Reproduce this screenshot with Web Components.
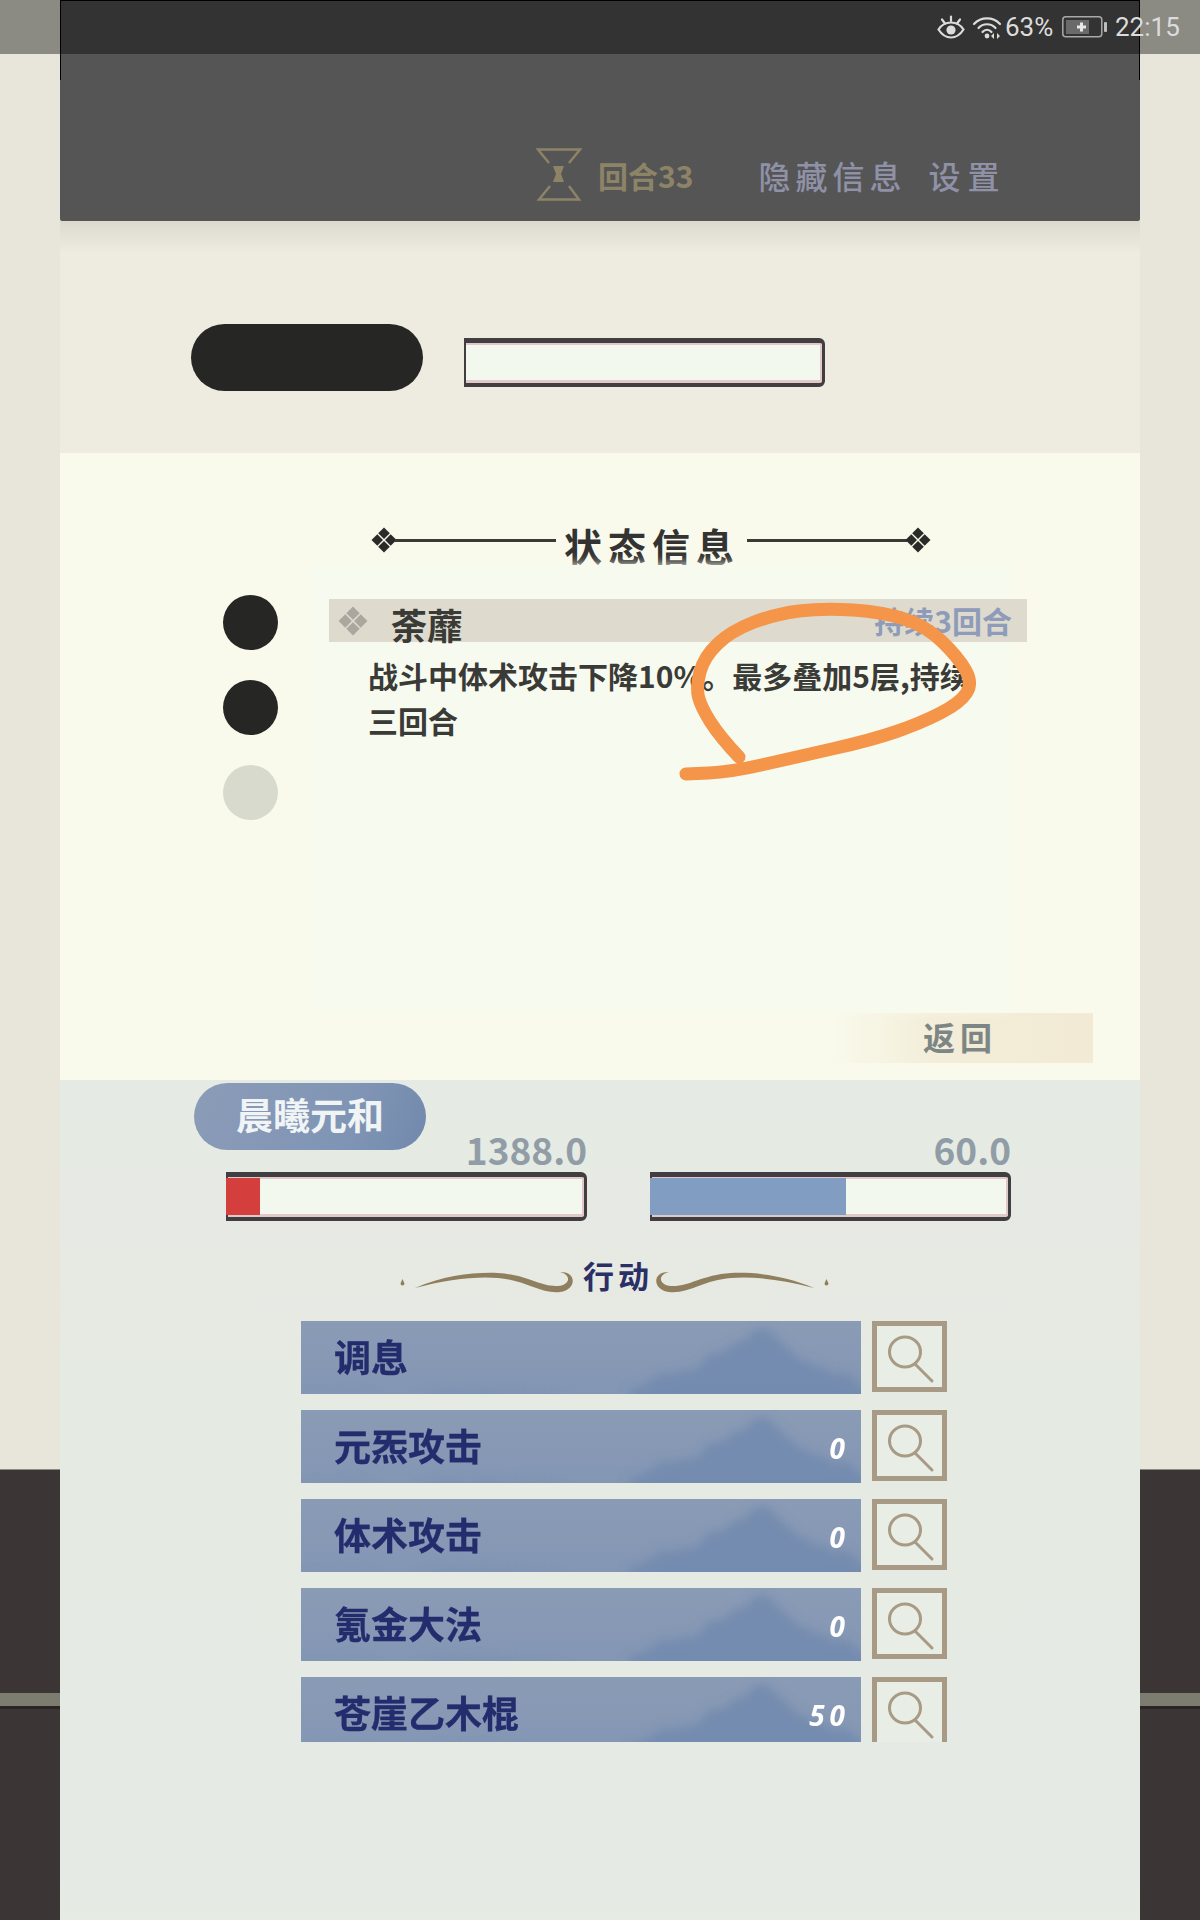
<!DOCTYPE html>
<html lang="zh">
<head>
<meta charset="utf-8">
<title>状态信息</title>
<style>
    html, body { margin: 0; padding: 0; }
    body {
        width: 1200px;
        height: 1920px;
        overflow: hidden;
        position: relative;
        font-family: "Noto Sans CJK SC", "Noto Sans", sans-serif;
        background: linear-gradient(#e8e6da 0 1469px, #8e8c82 1469px 1470px, #3b3535 1470px 1693px, #7c7c70 1693px 1706px, #282523 1706px 1709px, #3b3535 1709px);
    }
    game-panel { margin: 0 60px; }
</style>
</head>
<body>
<status-bar></status-bar>
<game-panel>
    <game-header></game-header>
    <enemy-section></enemy-section>
    <status-panel></status-panel>
    <player-section>
        <action-row label="调息"></action-row>
        <action-row label="元炁攻击" cost="0"></action-row>
        <action-row label="体术攻击" cost="0"></action-row>
        <action-row label="氪金大法" cost="0"></action-row>
        <action-row label="苍崖乙木棍" cost="50"></action-row>
    </player-section>
</game-panel>

<script>
// Four small diamonds, used by the title line and the status bar
const diamonds = (size, color) => `
    <svg width="${size}" height="${size}" viewBox="0 0 26 26" fill="${color}" style="flex:none;display:block">
        <path d="M13 .5l5.8 5.8L13 12 7.2 6.3z"/>
        <path d="M6.3 7.2L12 13l-5.7 5.8L.5 13z"/>
        <path d="M19.7 7.2L25.5 13l-5.8 5.8L14 13z"/>
        <path d="M13 14l5.8 5.7L13 25.5l-5.8-5.8z"/>
    </svg>`;

// Tapered swoosh on each side of the action heading
const swoosh = (flip) => `
    <svg width="178" height="30" viewBox="0 0 178 30" fill="#8f7f5e" style="${flip ? 'transform:scaleX(-1)' : ''}">
        <path d="M15 23C45 10 75 7 98 8c30 2 42 14 60 13 12-1 14-11 2-14 16-1 18 17 0 20-20 2-35-12-62-14-23-2-53 2-83 10z"/>
        <path d="M2.500 14l1.800 4a1.900 1.900 0 1 1-3.600 0z"/>
    </svg>`;

class StatusBar extends HTMLElement {
    constructor() {
        super();
        this.attachShadow({ mode: 'open' }).innerHTML = `
            <style>
                :host {
                    position: absolute; left: 0; top: 0; width: 1200px; height: 54px; z-index: 5;
                    display: flex; align-items: center; box-sizing: border-box; padding: 0 0 0 937px;
                    background: rgba(0, 0, 0, .4);
                    color: #dcdcdc; font: 400 26px/1 Roboto, sans-serif;
                }
                svg { display: block; flex: none; }
                .pct { margin-left: 3px; width: 57px; }
                .time { margin-left: 8px; }
            </style>
            <svg width="28" height="24" viewBox="0 0 28 24" fill="none" stroke="#dcdcdc" stroke-width="2.2" stroke-linecap="round">
                <path d="M1.5 14.5C5 9 9 7.5 14 7.5s9 1.500 12.500 7C23 20 19 22.500 14 22.500S5 20 1.500 14.500z"/>
                <circle cx="14" cy="15" r="4.600" fill="#dcdcdc" stroke="none"/>
                <path d="M5 4.500l3 4M14 1.500v4.500M23 4.500l-3 4"/>
            </svg>
            <svg width="30" height="24" viewBox="0 0 30 24" fill="none" stroke="#dcdcdc" stroke-width="2.2" stroke-linecap="round" style="margin-left:7px">
                <path d="M2 9C9 1.500 21 1.500 28 9"/>
                <path d="M6.500 13C11 8 19 8 23.500 13"/>
                <path d="M10.500 17C13 14 17 14 19.500 17"/>
                <circle cx="15" cy="21" r="2.400" fill="#dcdcdc" stroke="none"/>
                <path d="M22 18l-3 3 3 3zM25 18l3 3-3 3z" fill="#dcdcdc" stroke="none"/>
            </svg>
            <span class="pct">63%</span>
            <svg width="45" height="22" viewBox="0 0 45 22">
                <rect x=".8" y=".8" width="39" height="20" rx="3" fill="none" stroke="#a9a9a9" stroke-width="1.500"/>
                <rect x="4" y="4" width="23" height="14" fill="#6a6a6a"/>
                <path d="M18 6.500h3v3h3v3h-3v3h-3v-3h-3v-3h3z" fill="#e8e8e8"/>
                <rect x="42" y="6" width="3" height="10" rx="1" fill="#bdbdbd"/>
            </svg>
            <span class="time">22:15</span>`;
    }
}

class GamePanel extends HTMLElement {
    constructor() {
        super();
        this.attachShadow({ mode: 'open' }).innerHTML = `
            <style>:host { display: flex; flex-direction: column; height: 1920px; }</style>
            <slot></slot>`;
    }
}

class GameHeader extends HTMLElement {
    constructor() {
        super();
        this.attachShadow({ mode: 'open' }).innerHTML = `
            <style>
                :host {
                    display: flex; align-items: center; flex: none; position: relative; z-index: 1;
                    height: 221px; box-sizing: border-box; padding: 148px 0 20px 476px;
                    background: #555; border-radius: 0 0 2px 2px;
                }
                :host::before {
                    content: ""; position: absolute; left: 0; right: 0; top: 0; height: 80px;
                    border: 1px solid #000; border-bottom: 0; box-sizing: border-box;
                }
                svg { display: block; flex: none; }
                .round { margin-left: 16px; color: #8d8468; font: 700 30px/1 "Noto Sans CJK SC", sans-serif; }
                .link { color: #8f91a6; font: 500 32px/1 "Noto Sans CJK SC", sans-serif; letter-spacing: 5px; }
                .hide { margin-left: 65px; }
                .set { margin-left: 22px; letter-spacing: 7px; }
            </style>
            <svg width="46" height="53" viewBox="0 0 46 53" fill="none" stroke="#8d8468" stroke-width="2.400">
                <path d="M13 15L2 1.500h42L33 15"/>
                <path d="M14 38L3 51.500h40L33 38"/>
                <path d="M17 18h11l-3 8 3 8H17l3-8z" fill="#8d8468" stroke="none"/>
            </svg>
            <span class="round">回合33</span>
            <span class="link hide">隐藏信息</span>
            <span class="link set">设置</span>`;
    }
}

class FrameBar extends HTMLElement {
    constructor() {
        super();
        const fill = this.getAttribute('fill') || 'transparent';
        const width = this.getAttribute('fill-width') || '0';
        this.attachShadow({ mode: 'open' }).innerHTML = `
            <style>
                :host {
                    display: flex; flex: none; box-sizing: border-box; width: 361px; height: 49px;
                    border: solid #403e40; border-width: 5px 3px 4px 2px; border-radius: 0 6px 6px 0;
                    background: #f3f8ee;
                    box-shadow: inset 0 2px 0 #e2c8c8, inset 0 -3px 0 #e2c8c8, inset -2px 0 0 #e2c8c8;
                }
                .fill { width: ${width}px; margin: 1px 0 2px -2px; background: ${fill}; }
            </style>
            <div class="fill"></div>`;
    }
}

class EnemySection extends HTMLElement {
    constructor() {
        super();
        this.attachShadow({ mode: 'open' }).innerHTML = `
            <style>
                :host {
                    display: flex; align-items: flex-start; gap: 41px; flex: none;
                    height: 232px; box-sizing: border-box; padding: 103px 0 0 131px;
                    background: linear-gradient(#dcdace 0, #eeece0 32px);
                }
                .pill { width: 232px; height: 67px; border-radius: 34px; background: #262624; }
                frame-bar { margin-top: 14px; }
            </style>
            <div class="pill"></div>
            <frame-bar></frame-bar>`;
    }
}

class StatusPanel extends HTMLElement {
    constructor() {
        super();
        // Hand-drawn orange mark, page coordinates
        const pts = [[739,757],[720,737],[701,707],[696,687],[704,657],[731,631],[775,614],[823,608],[883,612],[926,626],[958,657],[973,683],[960,703],[921,723],[872,740],[796,757],[731,772],[686,774]];
        let d = `M${pts[0][0]} ${pts[0][1]}`;
        for (let i = 1; i < pts.length - 1; i++) {
            const mx = (pts[i][0] + pts[i + 1][0]) / 2;
            const my = (pts[i][1] + pts[i + 1][1]) / 2;
            d += ` Q${pts[i][0]} ${pts[i][1]} ${mx} ${my}`;
        }
        d += ` L${pts[pts.length - 1][0]} ${pts[pts.length - 1][1]}`;

        this.attachShadow({ mode: 'open' }).innerHTML = `
            <style>
                :host {
                    display: block; position: relative; flex: none; height: 627px; box-sizing: border-box;
                    padding-top: 74px; background: #f9faeb; color: #3a3a37;
                }
                .title { display: flex; align-items: flex-start; margin-left: 311px; height: 36px; }
                .title .line { flex: none; height: 3px; margin-top: 12px; background: #3a3a37; }
                .title b { flex: none; width: 176px; margin: 0 7px 0 8px; font: 700 38px/36px "Noto Sans CJK SC", sans-serif; letter-spacing: 6px; color: #333; white-space: nowrap; }
                .body { display: flex; gap: 34px; margin: 2px 0 0 163px; }
                .dots { display: flex; flex-direction: column; gap: 30px; padding-top: 30px; }
                .dots i { display: block; width: 55px; height: 55px; border-radius: 50%; background: #262624; }
                .dots i.off { background: #d9dace; }
                .sheet { width: 698px; height: 445px; box-sizing: border-box; padding: 34px 0 0 17px; background: #f7faee; box-shadow: 0 0 10px #f7faee; }
                .bar { display: flex; align-items: center; width: 698px; height: 43px; box-sizing: border-box; padding: 0 15px 0 9px; background: #dedace; }
                .name { margin-left: 23px; font: 700 36px/43px "Noto Sans CJK SC", sans-serif; padding-top: 4px; height: 39px; }
                .turns { margin-left: auto; color: #8e9cb9; font: 700 30px/43px "Noto Sans CJK SC", sans-serif; }
                .desc { width: 610px; margin: 11px 0 0 39px; font: 700 30px/45px "Noto Sans CJK SC", sans-serif; }
                .back {
                    display: flex; align-items: center; box-sizing: border-box; width: 260px; height: 50px; margin: 3px 0 0 773px;
                    padding: 0 0 4px 90px; background: linear-gradient(90deg, #f9faeb 0, #f3edd9 40%, #f2ead4 100%);
                    color: #7c8785; font: 700 32px/46px "Noto Sans CJK SC", sans-serif; letter-spacing: 5px;
                }
                .mark { position: absolute; left: 0; top: 0; pointer-events: none; }
            </style>
            <div class="title">
                ${diamonds(26, '#2a2a28')}
                <span class="line" style="width:161px;margin-left:-2px"></span>
                <b>状态信息</b>
                <span class="line" style="width:160px;margin-right:-2px"></span>
                ${diamonds(26, '#2a2a28')}
            </div>
            <div class="body">
                <div class="dots"><i></i><i></i><i class="off"></i></div>
                <div class="sheet">
                    <div class="bar">
                        ${diamonds(30, '#aba79f')}
                        <span class="name">荼蘼</span>
                        <span class="turns">持续3回合</span>
                    </div>
                    <div class="desc">战斗中体术攻击下降10%。最多叠加5层,持续三回合</div>
                </div>
            </div>
            <div class="back">返回</div>
            <svg class="mark" width="1080" height="627" viewBox="60 453 1080 627" fill="none">
                <path d="${d}" stroke="#f49549" stroke-width="13" stroke-linecap="round" stroke-linejoin="round"/>
            </svg>`;
    }
}

class ActionRow extends HTMLElement {
    constructor() {
        super();
        const label = this.getAttribute('label');
        const cost = this.getAttribute('cost') || '';
        this.attachShadow({ mode: 'open' }).innerHTML = `
            <style>
                :host { display: flex; gap: 11px; flex: none; height: 73px; }
                .main {
                    position: relative; overflow: hidden; display: flex; align-items: center; justify-content: space-between;
                    width: 560px; box-sizing: border-box; padding: 0 16px 2px 33px;
                    background: linear-gradient(#8a9bb5, #8396b4);
                }
                .wash { position: absolute; inset: 0; }
                .label { position: relative; color: #232c6c; font: 700 37px/1 "Noto Sans CJK SC", sans-serif; -webkit-text-stroke: .3px #232c6c; }
                .cost { position: relative; top: 2px; color: #fff; font: italic 700 28px/1 "Noto Sans", sans-serif; letter-spacing: 5px; margin-right: -5px; }
                .find { flex: none; box-sizing: border-box; width: 75px; height: 71px; border: 5px solid #a89a84; background: #e8ede6; }
                .find svg { display: block; }
            </style>
            <div class="main">
                <svg class="wash" width="560" height="73" viewBox="0 0 560 73">
                    <defs>
                        <filter id="soft" x="-20%" y="-50%" width="140%" height="200%">
                            <feTurbulence type="fractalNoise" baseFrequency=".04" numOctaves="3" seed="7"/>
                            <feDisplacementMap in="SourceGraphic" scale="22"/>
                            <feGaussianBlur stdDeviation="5"/>
                        </filter>
                    </defs>
                    <g filter="url(#soft)">
                        <path d="M300 90L380 48 430 30 466 8 505 45 545 52 590 90z" fill="#7289ae" opacity=".85"/>
                        <path d="M100 90L140 66 180 70 260 76 300 90z" fill="#7a90b2" opacity=".7"/>
                        <path d="M0 84L50 68 90 90z" fill="#8095b5" opacity=".7"/>
                    </g>
                </svg>
                <span class="label">${label}</span>
                <span class="cost">${cost}</span>
            </div>
            <div class="find">
                <svg width="65" height="61" viewBox="0 0 65 61" fill="none" stroke="#a89a84" stroke-width="3" stroke-linecap="round">
                    <ellipse cx="28" cy="26" rx="15.500" ry="15"/>
                    <path d="M38 38l17 17"/>
                </svg>
            </div>`;
    }
}

class PlayerSection extends HTMLElement {
    constructor() {
        super();
        this.attachShadow({ mode: 'open' }).innerHTML = `
            <style>
                :host {
                    display: block; flex: 1; box-sizing: border-box; padding-top: 3px;
                    background: linear-gradient(#e5ebe4 0, #e7e9e3 190px, #e5ebe3 320px, #e5ebe4 800px, #e6ece4 100%);
                }
                .who {
                    display: flex; align-items: center; justify-content: center; width: 232px; height: 67px; margin: 0 0 -20px 134px;
                    box-sizing: border-box; padding-bottom: 4px;
                    border-radius: 34px; background: linear-gradient(110deg, #8b9cb8, #7f94b4 70%, #7189ad);
                    color: #f0f4f5; font: 700 37px/1 "Noto Sans CJK SC", sans-serif;
                }
                .meters { display: flex; gap: 63px; margin-left: 166px; }
                .meter { display: flex; flex-direction: column; width: 361px; }
                .value { height: 42px; text-align: right; color: #919da6; font: 700 37px/38px "Noto Sans CJK SC", sans-serif; }
                .heading { display: flex; align-items: flex-start; height: 30px; margin: 44px 0 26px 340px; }
                .heading b { margin: 0 -2px 0 5px; color: #2a2f66; font: 700 31px/20px "Noto Sans CJK SC", sans-serif; letter-spacing: 4px; white-space: nowrap; }
                .heading svg { display: block; flex: none; }
                .list { display: flex; flex-direction: column; gap: 16px; height: 421px; overflow: hidden; margin-left: 241px; }
            </style>
            <div class="who">晨曦元和</div>
            <div class="meters">
                <div class="meter">
                    <div class="value">1388.0</div>
                    <frame-bar fill="#d43f3d" fill-width="34"></frame-bar>
                </div>
                <div class="meter">
                    <div class="value">60.0</div>
                    <frame-bar fill="#819dc1" fill-width="196"></frame-bar>
                </div>
            </div>
            <div class="heading">
                ${swoosh(false)}
                <b>行动</b>
                ${swoosh(true)}
            </div>
            <div class="list"><slot></slot></div>`;
    }
}

customElements.define('status-bar', StatusBar);
customElements.define('game-panel', GamePanel);
customElements.define('game-header', GameHeader);
customElements.define('frame-bar', FrameBar);
customElements.define('enemy-section', EnemySection);
customElements.define('status-panel', StatusPanel);
customElements.define('action-row', ActionRow);
customElements.define('player-section', PlayerSection);
</script>
</body>
</html>
